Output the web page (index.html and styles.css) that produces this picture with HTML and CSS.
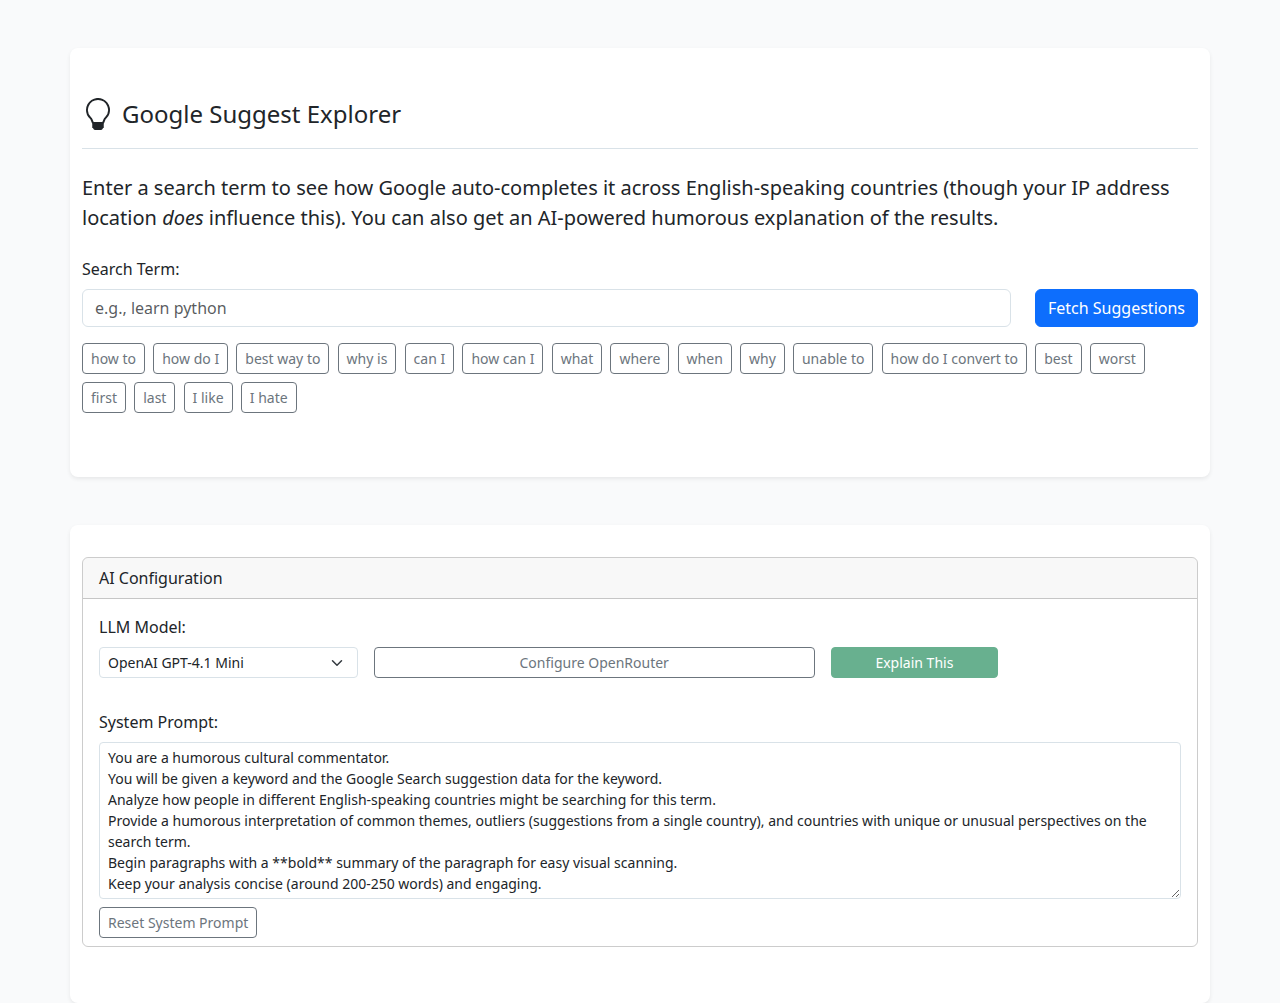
FILE: index.html
```html
<!DOCTYPE html>
<html lang="en">
<head>
<meta charset="utf-8">
<title>Google Suggest Explorer</title>
<link rel="stylesheet" href="styles.css">
</head>
<body>
<main class="container panel intro">
  <h1 class="title">
    <svg class="bulb" viewBox="0 0 16 16" fill="currentColor" aria-hidden="true"><path d="M2 6a6 6 0 1 1 10.174 4.31c-.203.196-.359.4-.453.619l-.762 1.769A.5.5 0 0 1 10.5 13a.5.5 0 0 1 0 1 .5.5 0 0 1 0 1l-.224.447a1 1 0 0 1-.894.553H6.618a1 1 0 0 1-.894-.553L5.5 15a.5.5 0 0 1 0-1 .5.5 0 0 1 0-1 .5.5 0 0 1-.46-.302l-.761-1.77a2 2 0 0 0-.453-.618A5.98 5.98 0 0 1 2 6m6-5a5 5 0 0 0-3.479 8.592c.263.254.514.564.676.941L5.83 12h4.342l.632-1.467c.162-.377.413-.687.676-.941A5 5 0 0 0 8 1"/></svg>
    <span>Google Suggest Explorer</span>
  </h1>
  <p class="lead">Enter a search term to see how Google auto-completes it across English-speaking countries (though your IP address location <em>does</em> influence this). You can also get an AI-powered humorous explanation of the results.</p>
  <label class="label" for="term">Search Term:</label>
  <div class="search-row">
    <input class="control" id="term" type="text" placeholder="e.g., learn python">
    <button class="btn btn-primary">Fetch Suggestions</button>
  </div>
  <div class="chips">
    <button class="btn btn-sm btn-outline">how to</button>
    <button class="btn btn-sm btn-outline">how do I</button>
    <button class="btn btn-sm btn-outline">best way to</button>
    <button class="btn btn-sm btn-outline">why is</button>
    <button class="btn btn-sm btn-outline">can I</button>
    <button class="btn btn-sm btn-outline">how can I</button>
    <button class="btn btn-sm btn-outline">what</button>
    <button class="btn btn-sm btn-outline">where</button>
    <button class="btn btn-sm btn-outline">when</button>
    <button class="btn btn-sm btn-outline">why</button>
    <button class="btn btn-sm btn-outline">unable to</button>
    <button class="btn btn-sm btn-outline">how do I convert to</button>
    <button class="btn btn-sm btn-outline">best</button>
    <button class="btn btn-sm btn-outline">worst</button>
    <button class="btn btn-sm btn-outline">first</button>
    <button class="btn btn-sm btn-outline">last</button>
    <button class="btn btn-sm btn-outline">I like</button>
    <button class="btn btn-sm btn-outline">I hate</button>
  </div>
</main>
<section class="container panel ai">
  <div class="card">
    <div class="card-header">AI Configuration</div>
    <div class="card-body">
      <label class="label" for="model">LLM Model:</label>
      <div class="model-row">
        <div class="select-wrap">
          <select class="control control-sm select" id="model"><option>OpenAI GPT-4.1 Mini</option></select>
          <svg class="chevron" viewBox="0 0 16 16" aria-hidden="true"><path fill="none" stroke="#343a40" stroke-linecap="round" stroke-linejoin="round" stroke-width="2" d="m2 5 6 6 6-6"/></svg>
        </div>
        <button class="btn btn-sm btn-outline">Configure OpenRouter</button>
        <button class="btn btn-sm btn-success" disabled>Explain This</button>
      </div>
      <label class="label" for="prompt">System Prompt:</label>
      <textarea class="control control-sm prompt" id="prompt" rows="7">You are a humorous cultural commentator.
You will be given a keyword and the Google Search suggestion data for the keyword.
Analyze how people in different English-speaking countries might be searching for this term.
Provide a humorous interpretation of common themes, outliers (suggestions from a single country), and countries with unique or unusual perspectives on the search term.
Begin paragraphs with a **bold** summary of the paragraph for easy visual scanning.
Keep your analysis concise (around 200-250 words) and engaging.</textarea>
      <button class="btn btn-sm btn-outline reset">Reset System Prompt</button>
    </div>
  </div>
</section>
</body>
</html>
```

FILE: styles.css
```css
*,
*::before,
*::after {
  box-sizing: border-box;
}

html {
  overflow: hidden;
}

body {
  margin: 0;
  background: #f9fafb;
  color: #212529;
  font-family: "Noto Sans", "Liberation Sans", sans-serif;
  font-size: 16px;
  line-height: 1.5;
}

.container {
  width: 1140px;
  margin: 48px auto 0;
}

.panel {
  padding: 48px 12px;
  background: #fff;
  border-radius: 8px;
  box-shadow: 0 2px 4px rgba(0, 0, 0, .075);
}

.intro {
  height: 429px;
}

.ai {
  height: 478px;
  padding-top: 32px;
}

.title {
  display: flex;
  align-items: center;
  gap: 8px;
  height: 53px;
  margin: 0 0 24px;
  padding-bottom: 16px;
  border-bottom: 1px solid #d9e2e8;
  font-size: 24px;
  font-weight: 400;
  line-height: 36px;
}

.bulb {
  width: 32px;
  height: 32px;
}

.lead {
  margin: 0 0 24px;
  font-size: 20px;
  line-height: 30px;
}

.label {
  display: block;
  margin-bottom: 8px;
}

.search-row {
  display: flex;
  gap: 24px;
}

.control {
  display: block;
  width: 100%;
  margin: 0;
  padding: 6px 12px;
  border: 1px solid #d9e2e8;
  border-radius: 6px;
  background: #fff;
  color: #212529;
  font: inherit;
}

.search-row .control {
  flex: 1;
  min-width: 0;
  height: 38px;
}

.control::placeholder {
  color: rgba(33, 37, 41, .75);
  opacity: 1;
}

.control-sm {
  padding: 4px 8px;
  border-radius: 4px;
  font-size: 14px;
}

.btn {
  padding: 6px 12px;
  border: 1px solid transparent;
  border-radius: 6px;
  font: inherit;
  white-space: nowrap;
}

.btn-sm {
  height: 31px;
  padding: 4px 8px;
  border-radius: 4px;
  font-size: 14px;
}

.btn-primary {
  background: #0d6efd;
  border-color: #0d6efd;
  color: #fff;
}

.btn-outline {
  background: transparent;
  border-color: #6c757d;
  color: #6c757d;
}

.btn-success {
  background: #198754;
  border-color: #198754;
  color: #fff;
  opacity: .65;
}

.chips {
  display: flex;
  flex-wrap: wrap;
  gap: 8px 8.2px;
  margin-top: 16px;
  padding-right: 8px;
}

.card {
  border: 1px solid rgba(0, 0, 0, .2);
  border-radius: 6px;
}

.card-header {
  padding: 8px 16px;
  background: rgba(33, 37, 41, .03);
  border-bottom: 1px solid rgba(0, 0, 0, .2);
  border-radius: 5px 5px 0 0;
}

.card-body {
  padding: 16px 16px 8px;
}

.model-row {
  display: grid;
  grid-template-columns: 258.5px 441.4px 167px;
  gap: 16px;
  margin-bottom: 32px;
}

.select-wrap {
  position: relative;
}

.select {
  height: 31px;
  appearance: none;
}

.chevron {
  position: absolute;
  top: 10px;
  right: 15px;
  width: 12px;
  height: 12px;
}

.prompt {
  height: 157px;
  resize: vertical;
}

.reset {
  display: block;
  margin-top: 8px;
}
```
